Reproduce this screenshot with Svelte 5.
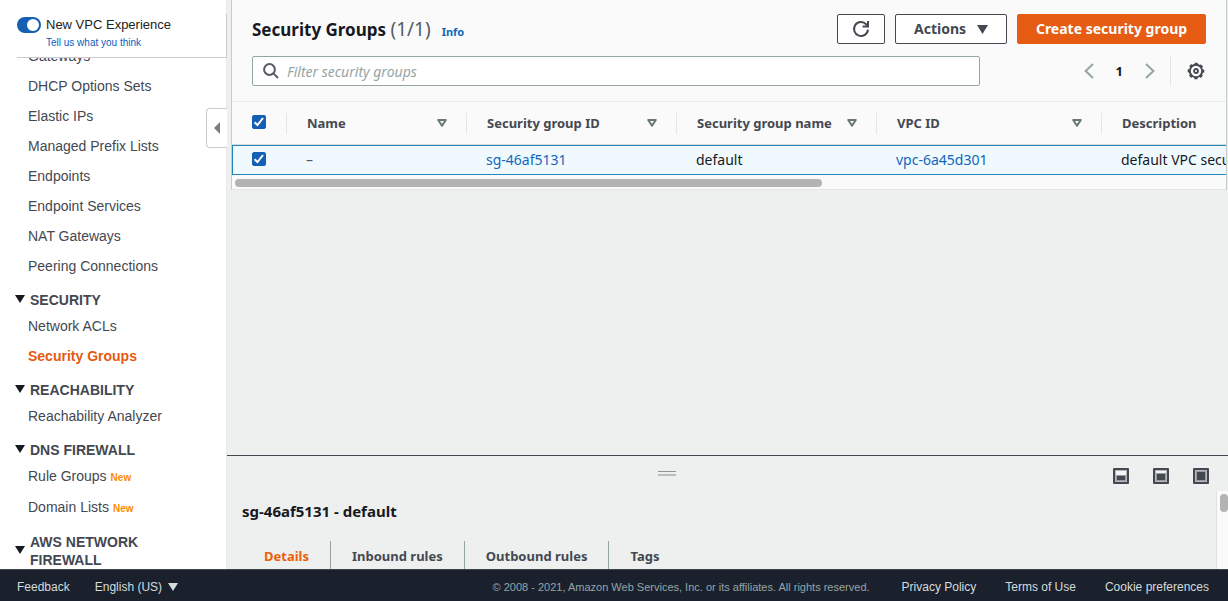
<script>
  const sections = [
    {
      title: null,
      items: [
        { label: 'Gateways' },
        { label: 'DHCP Options Sets' },
        { label: 'Elastic IPs' },
        { label: 'Managed Prefix Lists' },
        { label: 'Endpoints' },
        { label: 'Endpoint Services' },
        { label: 'NAT Gateways' },
        { label: 'Peering Connections' }
      ]
    },
    { title: 'SECURITY', items: [{ label: 'Network ACLs' }, { label: 'Security Groups', active: true }] },
    { title: 'REACHABILITY', items: [{ label: 'Reachability Analyzer' }] },
    {
      title: 'DNS FIREWALL',
      items: [
        { label: 'Rule Groups', isNew: true },
        { label: 'Domain Lists', isNew: true }
      ]
    },
    { title: 'AWS NETWORK FIREWALL', items: [] }
  ];

  const columns = [
    { label: 'Name', cls: 'name', sort: true },
    { label: 'Security group ID', cls: 'sgid', sort: true },
    { label: 'Security group name', cls: 'sgname', sort: true },
    { label: 'VPC ID', cls: 'vpc', sort: true },
    { label: 'Description', cls: 'desc', sort: false }
  ];

  const panelSizes = [
    { label: 'Small panel', top: 8 },
    { label: 'Medium panel', top: 6 },
    { label: 'Full panel', top: 4 }
  ];

  const tabs = ['Details', 'Inbound rules', 'Outbound rules', 'Tags'];
  let activeTab = $state('Details');
  let newExperience = $state(true);
  let selected = $state(true);
  let filter = $state('');
</script>

<div class="app">
  <div class="body">
    <aside class="sidebar">
      <div class="experience">
        <div class="experience-inner">
          <input id="exp" class="switch" type="checkbox" role="switch" bind:checked={newExperience} />
          <div class="experience-text">
            <label for="exp">New VPC Experience</label>
            <a href="#feedback">Tell us what you think</a>
          </div>
        </div>
      </div>
      <nav>
        <div class="nav-scroll">
          {#each sections as section}
            {#if section.title}
              <h3>
                <svg width="10" height="8" viewBox="0 0 10 8" aria-hidden="true"><path d="M0 0h10L5 8z" fill="#16191f" /></svg>
                <span>{section.title}</span>
              </h3>
            {/if}
            <ul>
              {#each section.items as item}
                <li class:tall={item.isNew}>
                  <a href="#nav" class:active={item.active}>{item.label}</a>
                  {#if item.isNew}<span class="new">New</span>{/if}
                </li>
              {/each}
            </ul>
          {/each}
        </div>
      </nav>
      <button class="collapse" aria-label="Collapse navigation">
        <svg width="6" height="12" viewBox="0 0 6 12" aria-hidden="true"><path d="M6 0v12L0 6z" fill="#7d7d7d" /></svg>
      </button>
    </aside>

    <div class="content">
      <main>
        <section class="card">
          <header>
            <div class="title-row">
              <h1>Security Groups <span>(1/1)</span></h1>
              <a class="info" href="#info">Info</a>
              <div class="actions">
                <button class="btn refresh" aria-label="Refresh">
                  <svg width="18" height="18" viewBox="0 0 18 18" fill="none" stroke="#444851" stroke-width="2" aria-hidden="true">
                    <path d="M16 9.6A7 7 0 1 1 14.2 4.3L16 6" />
                    <path d="M16 1v5.4H10.6" />
                  </svg>
                </button>
                <button class="btn menu" aria-haspopup="menu">
                  Actions
                  <svg width="11" height="9" viewBox="0 0 11 9" aria-hidden="true"><path d="M0 0h11L5.5 9z" fill="#444851" /></svg>
                </button>
                <button class="btn primary">Create security group</button>
              </div>
            </div>
            <div class="tools-row">
              <div class="search">
                <svg width="16" height="16" viewBox="0 0 16 16" fill="none" stroke="#545b64" stroke-width="2" aria-hidden="true">
                  <circle cx="6.5" cy="6.5" r="5.4" /><path d="M10.4 10.4l4.6 4.6" />
                </svg>
                <input type="text" aria-label="Filter security groups" placeholder="Filter security groups" bind:value={filter} />
              </div>
              <div class="pager">
                <button aria-label="Previous page">
                  <svg width="10" height="16" viewBox="0 0 10 16" fill="none" stroke="#95a5a6" stroke-width="2" aria-hidden="true"><path d="M9 1L1.6 8 9 15" /></svg>
                </button>
                <span>1</span>
                <button aria-label="Next page">
                  <svg width="10" height="16" viewBox="0 0 10 16" fill="none" stroke="#95a5a6" stroke-width="2" aria-hidden="true"><path d="M1 1l7.4 7L1 15" /></svg>
                </button>
              </div>
              <button class="gear" aria-label="Preferences">
                <svg width="18" height="18" viewBox="0 0 18 18" fill="none" stroke="#444851" aria-hidden="true">
                  <circle cx="9" cy="9" r="6.2" stroke-width="2" />
                  <circle cx="9" cy="9" r="7.5" stroke-width="1.6" stroke-dasharray="3.2 2.69" stroke-dashoffset="1.6" />
                  <circle cx="9" cy="9" r="2" stroke-width="1.8" />
                </svg>
              </button>
            </div>
          </header>

          <div class="table-wrap">
            <table>
              <thead>
                <tr>
                  <th class="check"><input type="checkbox" aria-label="Select all" bind:checked={selected} /></th>
                  {#each columns as col}
                    <th class={col.cls}>
                      <div class="th">
                        <span>{col.label}</span>
                        {#if col.sort}
                          <svg width="10" height="8" viewBox="0 0 10 8" fill="none" stroke="#687878" stroke-width="2" stroke-linejoin="round" aria-hidden="true"><path d="M1.2 1h7.6L5 6.8z" /></svg>
                        {/if}
                      </div>
                    </th>
                  {/each}
                </tr>
              </thead>
              <tbody>
                <tr>
                  <td class="check"><input type="checkbox" aria-label="Select sg-46af5131" bind:checked={selected} /></td>
                  <td class="empty">–</td>
                  <td><a href="#sg">sg-46af5131</a></td>
                  <td>default</td>
                  <td><a href="#vpc">vpc-6a45d301</a></td>
                  <td>default VPC security group</td>
                </tr>
              </tbody>
            </table>
          </div>
          <div class="hscroll"><div class="thumb"></div></div>
        </section>
      </main>

      <section class="panel">
        <div class="panel-bar">
          <div class="grip"></div>
          <div class="panel-sizes">
            {#each panelSizes as size}
              <button aria-label={size.label}>
                <svg width="16" height="16" viewBox="0 0 16 16" aria-hidden="true">
                  <rect width="16" height="16" rx="1" fill="#444851" />
                  <rect x="2" y="2" width="12" height="12" fill="#b4b8bc" />
                  <rect x="3" y="3" width="10" height="10" fill="#f4f5f5" />
                  <rect x="3" y={size.top - 1} width="10" height={14 - size.top} fill="#9a9ea3" />
                  <rect x="4" y={size.top} width="8" height={12 - size.top} fill="#444851" />
                </svg>
              </button>
            {/each}
          </div>
        </div>
        <div class="panel-body">
          <div class="panel-main">
            <h2>sg-46af5131 - default</h2>
            <div class="tabs" role="tablist">
              {#each tabs as tab}
                <button role="tab" aria-selected={activeTab === tab} onclick={() => (activeTab = tab)}>{tab}</button>
              {/each}
            </div>
          </div>
          <div class="vscroll"><div class="thumb"></div></div>
        </div>
      </section>
    </div>
  </div>

  <footer>
    <a href="#feedback">Feedback</a>
    <div class="lang">
      <select aria-label="Language"><option>English (US)</option></select>
      <svg width="10" height="8" viewBox="0 0 10 8" aria-hidden="true"><path d="M0 0h10L5 8z" fill="#d5dbdb" /></svg>
    </div>
    <span class="copy">© 2008 - 2021, Amazon Web Services, Inc. or its affiliates. All rights reserved.</span>
    <div class="legal">
      <a href="#privacy">Privacy Policy</a>
      <a href="#terms">Terms of Use</a>
      <a href="#cookies">Cookie preferences</a>
    </div>
  </footer>
</div>

<style>
  :global(body) { margin: 0; }
  .app {
    --ember: 'Noto Sans', 'Open Sans', sans-serif;
    --helv: 'Liberation Sans', Arial, sans-serif;
    display: flex;
    flex-direction: column;
    height: 100vh;
    overflow: hidden;
    background: #eef0f0;
    color: #16191f;
    font: 13px/18px var(--ember);
  }
  .app :global(*) { box-sizing: border-box; }
  svg { display: block; flex: none; }
  a { text-decoration: none; color: #1166bb; }
  button { font: inherit; color: inherit; background: none; border: 0; padding: 0; margin: 0; cursor: pointer; }
  h1, h2, h3, ul { margin: 0; padding: 0; }
  ul { list-style: none; }

  .body { display: flex; flex: 1; min-height: 0; }

  .sidebar {
    position: relative;
    display: flex;
    flex-direction: column;
    flex: none;
    width: 227px;
    background: #fff;
    box-shadow: inset -1px 0 #e9ebeb;
    font: 14px/18px var(--helv);
  }
  .experience { flex: none; padding: 14px 0 0 17px; }
  .experience-inner {
    display: flex;
    gap: 5px;
    height: 44px;
    padding-top: 2px;
    border-bottom: 1px solid #ccc;
    border-right: 1px solid #ccc;
  }
  .switch {
    appearance: none;
    flex: none;
    width: 24px;
    height: 16px;
    margin: 1px 0 0;
    padding: 2px;
    border-radius: 8px;
    background: #879596;
  }
  .switch::before { content: ''; display: block; width: 12px; height: 12px; border-radius: 50%; background: #fff; }
  .switch:checked { background: #1560b3; }
  .switch:checked::before { margin-left: 8px; }
  .experience-text { display: flex; flex-direction: column; }
  .experience-text label { font-size: 13px; color: #222; }
  .experience-text a { font-size: 10px; color: #0b5cbf; }

  nav { flex: 1; min-height: 0; overflow: hidden; }
  .nav-scroll { margin-top: -17px; }
  li { display: flex; align-items: center; height: 30px; padding-left: 28px; gap: 4px; white-space: nowrap; }
  li.tall { height: 31px; padding-bottom: 2px; }
  li a { color: #444851; }
  li a.active { color: #e45a10; font-weight: 700; }
  .new { font-size: 10px; font-weight: 700; color: #ff8c00; padding-top: 4px; }
  h3 {
    display: flex;
    align-items: center;
    gap: 5px;
    padding: 10px 60px 2px 15px;
    font-size: 14px;
    line-height: 18px;
    font-weight: 700;
    color: #444851;
  }
  h3 svg { margin-bottom: 2px; }
  .collapse {
    position: absolute;
    top: 108px;
    right: 0;
    display: flex;
    align-items: center;
    justify-content: center;
    width: 21px;
    height: 40px;
    background: #fff;
    border: 1px solid #ccc;
    border-right: 0;
    border-radius: 4px 0 0 4px;
  }

  .content { display: flex; flex-direction: column; flex: 1; min-width: 0; }
  main { flex: 1; padding: 0 1px 0 4px; }
  .card { background: #fafafa; border: solid #c4cccc; border-width: 0 1px; }
  .card header { padding: 14px 20px 15px; border-bottom: 1px solid #eaeded; }
  .title-row { display: flex; align-items: center; height: 30px; }
  h1 { font-size: 17px; line-height: 22px; font-weight: 700; white-space: nowrap; }
  h1 span { font-size: 19px; font-weight: 400; color: #545b64; }
  .info { font-size: 11px; font-weight: 700; margin: 6px 0 0 11px; }
  .actions { display: flex; gap: 10px; margin-left: auto; }
  .btn {
    display: flex;
    align-items: center;
    justify-content: center;
    height: 30px;
    padding: 0 20px;
    border: 1px solid #444851;
    border-radius: 2px;
    background: #fff;
    color: #444851;
    font-size: 14px;
    font-weight: 700;
    white-space: nowrap;
  }
  .refresh { width: 48px; padding: 0; }
  .menu { gap: 11px; width: 112px; padding: 0; }
  .primary { width: 189px; padding: 0; background: #e65c12; border-color: #e65c12; color: #fff; }

  .tools-row { display: flex; align-items: center; height: 30px; margin-top: 12px; padding-right: 1px; }
  .search {
    display: flex;
    align-items: center;
    flex: 1;
    height: 30px;
    padding-left: 10px;
    gap: 8px;
    border: 1px solid #95a5a6;
    border-radius: 2px;
    background: #fff;
  }
  .search input {
    flex: 1;
    min-width: 0;
    height: 28px;
    padding: 0;
    border: 0;
    outline: 0;
    background: none;
    color: #16191f;
    font: 14px/18px var(--ember);
  }
  .search input::placeholder { color: #95a5a6; opacity: 1; font-style: italic; }
  .pager {
    display: flex;
    align-items: center;
    gap: 22px;
    height: 30px;
    margin-left: 104px;
    padding-right: 15px;
    border-right: 1px solid #e3e7e7;
    font-weight: 700;
  }
  .gear { margin-left: 16px; }

  .table-wrap { overflow: hidden; }
  table { width: 1574px; table-layout: fixed; border-collapse: separate; border-spacing: 0; }
  th, td { padding: 0 0 0 20px; text-align: left; white-space: nowrap; }
  th { height: 43px; font-weight: 700; color: #444851; border-bottom: 1px solid #d5dbdb; }
  th.check { width: 54px; }
  th.name { width: 180px; }
  th.sgid { width: 210px; }
  th.sgname { width: 200px; }
  th.vpc { width: 225px; }
  .th {
    display: flex;
    align-items: center;
    justify-content: space-between;
    height: 21px;
    margin-left: -20px;
    padding: 0 19px 0 20px;
    border-left: 1px solid #e3e7e7;
  }
  td { height: 30px; font-size: 14px; background: #f0fafe; border: solid #2088bf; border-width: 1px 0; }
  td.check { border-left-width: 1px; padding-left: 19px; }
  td.empty { color: #545b64; }
  .check input {
    appearance: none;
    display: block;
    width: 14px;
    height: 14px;
    margin: 0 0 2px;
    border: 1px solid #687078;
    border-radius: 2px;
    background: #fff;
  }
  .check input:checked {
    border-color: #1560b3;
    background: #1560b3 url("data:image/svg+xml,%3Csvg xmlns='http://www.w3.org/2000/svg' viewBox='0 0 12 12' fill='none' stroke='white' stroke-width='2'%3E%3Cpath d='M1.5 6.3l3 2.7 5.5-7'/%3E%3C/svg%3E") center / 12px no-repeat;
  }
  .hscroll { height: 15px; padding: 4px 3px; background: #fafafa; border-bottom: 1px solid #e3e7e7; }
  .thumb { border-radius: 4px; background: #b3b3b3; }
  .hscroll .thumb { width: 59.4%; height: 8px; }

  .panel { flex: none; height: 114px; border-top: 1px solid #444851; overflow: hidden; display: flex; flex-direction: column; }
  .panel-bar { display: grid; grid-template-columns: 1fr auto; align-items: center; flex: none; height: 35px; padding: 0 19px 0 0; }
  .grip { justify-self: center; width: 18px; height: 5px; border-top: 1px solid #8d9499; border-bottom: 2px solid #b9bdbf; }
  .panel-sizes { display: flex; gap: 24px; padding: 5px 0 0 6px; }
  .panel-body { display: flex; flex: 1; min-height: 0; }
  .panel-main { flex: 1; padding: 10px 0 0 15px; }
  h2 { font-size: 15px; line-height: 20px; font-weight: 700; }
  .tabs { display: flex; margin: 20px 0 0 1px; }
  .tabs button { height: 30px; padding: 0 21px; font-size: 13px; font-weight: 700; color: #444851; border-right: 1px solid #95a5a6; }
  .tabs button:last-child { border-right: 0; }
  .tabs button[aria-selected='true'] { color: #eb5f07; }
  .vscroll { width: 12px; padding: 3px 0 0 3px; background: #fafafa; border-left: 1px solid #dfe2e2; }
  .vscroll .thumb { width: 8px; height: 18px; }

  footer {
    display: flex;
    align-items: center;
    flex: none;
    height: 32px;
    padding: 3px 19px 0 17px;
    background: #1a212d;
    border-top: 1px solid #3d444d;
    color: #d5dbdb;
    font: 12px/16px var(--helv);
    white-space: nowrap;
  }
  footer a { color: inherit; }
  .lang { display: flex; align-items: center; gap: 5px; margin-left: 25px; }
  .lang select { appearance: none; border: 0; padding: 0; background: none; color: inherit; font: inherit; }
  .copy { margin-left: auto; font-size: 11px; color: #95a5a6; }
  .legal { display: flex; gap: 29px; margin-left: 32px; }
</style>
